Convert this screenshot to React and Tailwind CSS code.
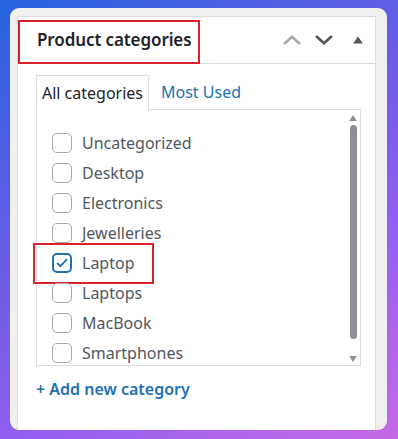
import { useState } from 'react';

const categories = [
    { name: 'Uncategorized', checked: false },
    { name: 'Desktop', checked: false },
    { name: 'Electronics', checked: false },
    { name: 'Jewelleries', checked: false },
    { name: 'Laptop', checked: true },
    { name: 'Laptops', checked: false },
    { name: 'MacBook', checked: false },
    { name: 'Smartphones', checked: false },
];

function Checkbox({ checked }) {
    return (
        <span
            className={`w-[20px] h-[20px] shrink-0 rounded-[5px] bg-white flex items-center justify-center ${
                checked ? 'border-2 border-[#2271b1]' : 'border border-[#a7aaad]'
            }`}
        >
            {checked && (
                <svg viewBox="0 0 20 20" className="w-[16px] h-[16px]" fill="none" stroke="#2271b1" strokeWidth="2.4" strokeLinecap="round" strokeLinejoin="round">
                    <path d="M4.5 10.5l3.5 3.5 7.5-8" />
                </svg>
            )}
        </span>
    );
}

export default function App() {
    const [tab, setTab] = useState('all');

    return (
        <div
            className="w-[398px] h-[439px] pt-[8px] pl-[10px] pr-[11px] pb-[9px] bg-[linear-gradient(150deg,#2563e0_0%,#6a5ce6_40%,#8e5ff0_65%,#c66ae6_100%)]"
            style={{ fontFamily: '"Noto Sans", "Open Sans", Arial, sans-serif' }}
        >
            <div className="h-full rounded-[9px] bg-[#f0f0f1] pt-[8px] pl-[7px] pr-[11px] flex flex-col">
                <div className="flex-1 bg-white border-t border-l border-r border-[#dcdcde] flex flex-col">
                    {/* cabecera */}
                    <div className="relative h-[47px] border-b border-[#dcdcde] flex items-center pl-[19px] pr-[10px]">
                        <h2 className="text-[17px] font-semibold text-[#1d2327] tracking-[-0.1px]">Product categories</h2>
                        <div className="absolute left-0 top-[3px] w-[182px] h-[44px] border-2 border-[#d8232a]" />
                        <div className="ml-auto flex items-center">
                            <svg viewBox="0 0 20 20" className="w-[22px] h-[22px]" fill="none" stroke="#a7aaad" strokeWidth="2.4" strokeLinecap="round">
                                <path d="M3.5 13l6.5-6 6.5 6" />
                            </svg>
                            <svg viewBox="0 0 20 20" className="w-[22px] h-[22px] ml-[10px]" fill="none" stroke="#50575e" strokeWidth="2.4" strokeLinecap="round">
                                <path d="M3.5 7l6.5 6 6.5-6" />
                            </svg>
                            <svg viewBox="0 0 20 20" className="w-[14px] h-[14px] ml-[16px]" fill="#50575e">
                                <path d="M10 5l7 10H3z" />
                            </svg>
                        </div>
                    </div>

                    {/* pestañas */}
                    <div className="pl-[18px] pr-[14px] pt-[10px]">
                        <div className="flex items-end text-[16px]">
                            <button
                                onClick={() => setTab('all')}
                                className="h-[35px] w-[113px] border border-b-0 border-[#dcdcde] bg-white text-[#1d2327] relative top-[1px] flex items-center justify-center"
                            >
                                All categories
                            </button>
                            <button onClick={() => setTab('most')} className="h-[34px] px-[12px] text-[#2271b1] flex items-center">
                                Most Used
                            </button>
                        </div>
                        <div className="h-[257px] border border-[#dcdcde] flex">
                            <ul className="flex-1 h-full pl-[15px] pt-[18px] [clip-path:inset(0_0_0_-30px)]">
                                {categories.map((c) => (
                                    <li key={c.name} className="relative h-[30px] flex items-center gap-[10px] text-[16px] text-[#50575e]">
                                        <Checkbox checked={c.checked} />
                                        <span>{c.name}</span>
                                        {c.checked && (
                                            <div className="absolute left-[-19px] top-[-5px] w-[121px] h-[41px] border-2 border-[#d8232a]" />
                                        )}
                                    </li>
                                ))}
                            </ul>
                            <div className="w-[14px] flex flex-col items-center pt-[5px] pb-[3px]">
                                <svg viewBox="0 0 10 8" className="w-[8px] h-[6px]" fill="#8c8f94"><path d="M5 0l5 8H0z" /></svg>
                                <div className="mt-[4px] w-[7px] h-[214px] rounded-full bg-[#8c8f94]" />
                                <div className="flex-1" />
                                <svg viewBox="0 0 10 8" className="w-[8px] h-[6px]" fill="#8c8f94"><path d="M0 0h10L5 8z" /></svg>
                            </div>
                        </div>
                        <a href="#" className="block mt-[11px] text-[16px] font-semibold text-[#2271b1]">+ Add new category</a>
                    </div>
                </div>
            </div>
        </div>
    );
}
